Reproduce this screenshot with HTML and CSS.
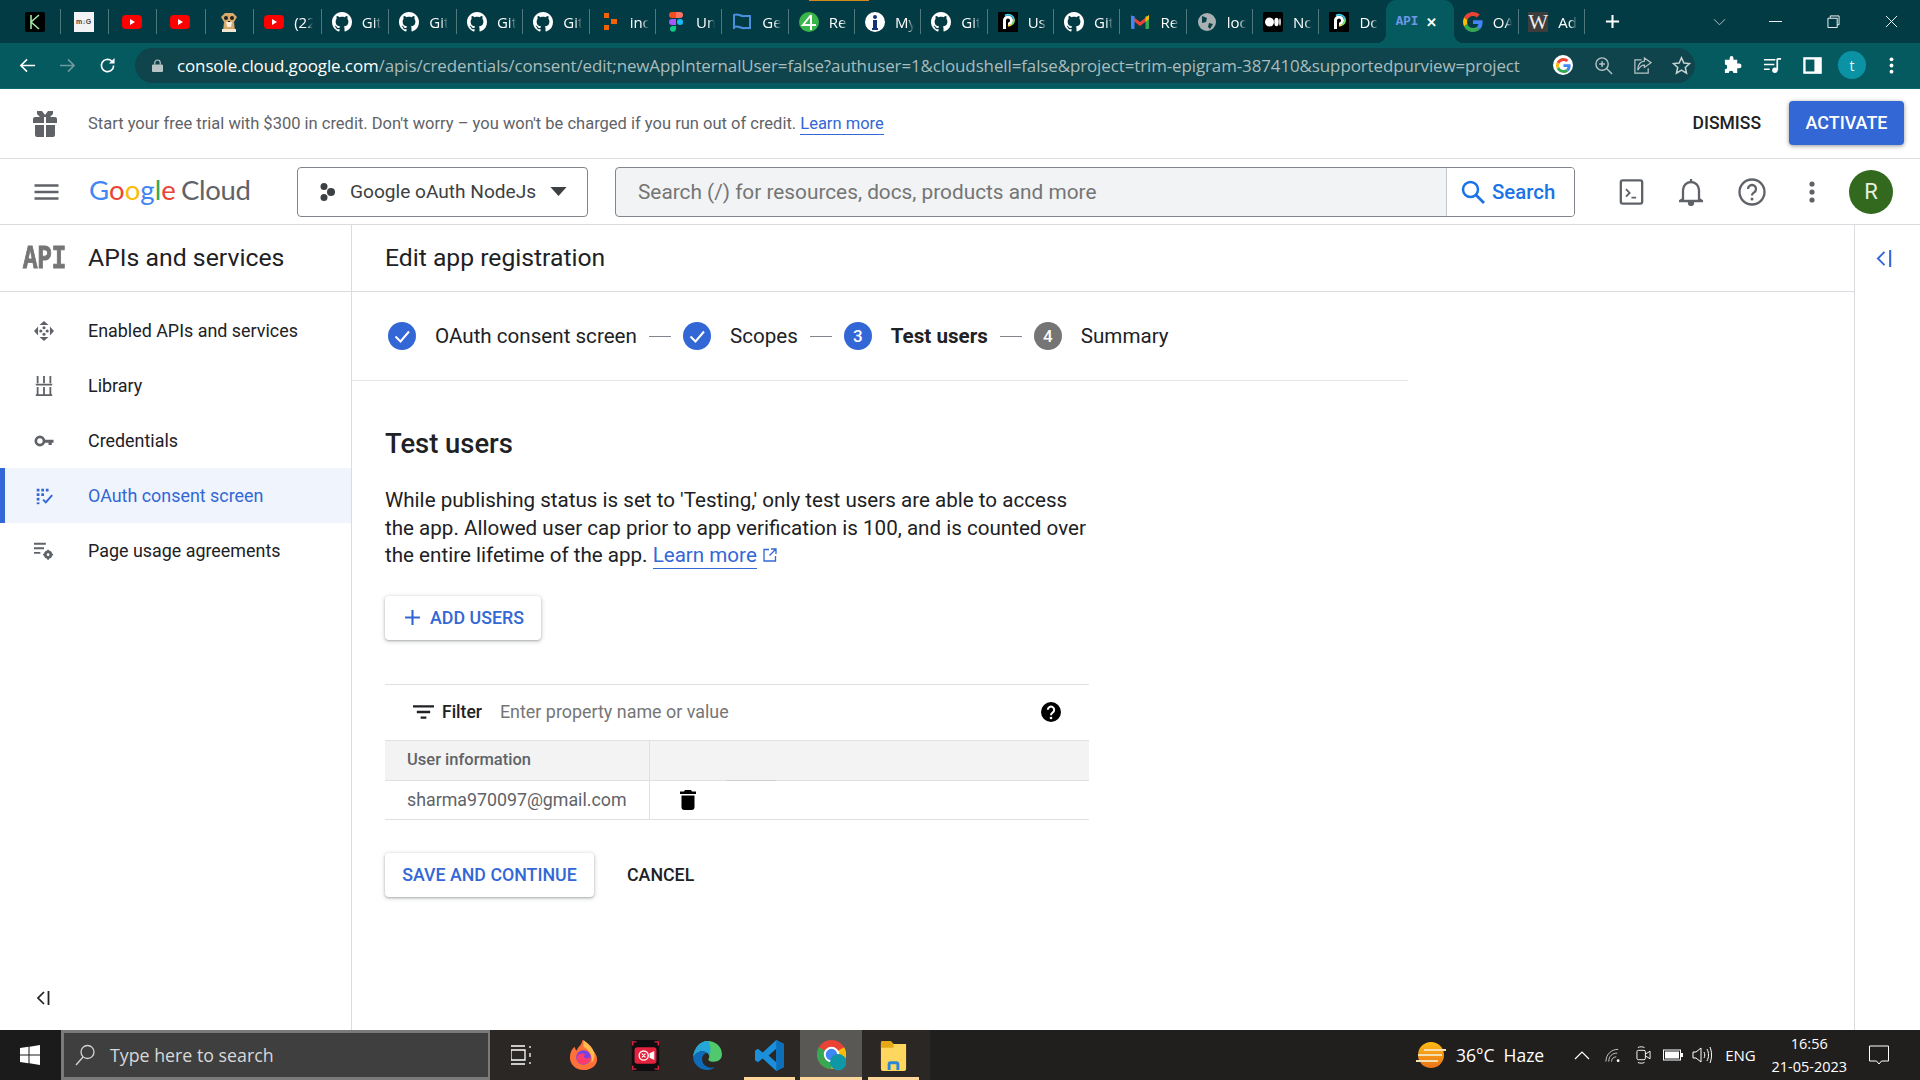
FILE: index.html
```html
<!DOCTYPE html>
<html lang="en">
<head>
<meta charset="utf-8">
<title>Edit app registration</title>
<link rel="stylesheet" href="styles.css">
</head>
<body>
<svg class="defs" aria-hidden="true">
  <symbol id="gh" viewBox="0 0 16 16"><path fill="#fff" fill-rule="evenodd" d="M8 0C3.58 0 0 3.58 0 8c0 3.54 2.29 6.53 5.47 7.59.4.07.55-.17.55-.41 0-.19-.01-.82-.01-1.49-2.01.37-2.53-.49-2.69-.94-.09-.23-.48-.94-.82-1.13-.28-.15-.68-.52-.01-.53.63-.01 1.08.58 1.23.82.72 1.21 1.87.87 2.33.66.07-.52.28-.87.51-1.07-1.78-.2-3.64-.89-3.64-3.95 0-.87.31-1.59.82-2.15-.08-.2-.36-1.02.08-2.12 0 0 .67-.21 2.2.82.64-.18 1.32-.27 2-.27.68 0 1.36.09 2 .27 1.53-1.04 2.2-.82 2.2-.82.44 1.1.16 1.92.08 2.12.51.56.82 1.27.82 2.15 0 3.07-1.87 3.75-3.65 3.95.29.25.54.73.54 1.48 0 1.07-.01 1.93-.01 2.2 0 .21.15.46.55.38A8.013 8.013 0 0016 8c0-4.42-3.58-8-8-8z"/></symbol>
  <symbol id="yt" viewBox="0 0 20 20"><rect y="3" width="20" height="14" rx="4" fill="#f00"/><path d="M8 7l5 3-5 3z" fill="#fff"/></symbol>
  <symbol id="gg" viewBox="0 0 48 48"><path fill="#EA4335" d="M24 9.5c3.54 0 6.71 1.22 9.21 3.6l6.85-6.85C35.9 2.38 30.47 0 24 0 14.62 0 6.51 5.38 2.56 13.22l7.98 6.19C12.43 13.72 17.74 9.5 24 9.5z"/><path fill="#4285F4" d="M46.98 24.55c0-1.57-.15-3.09-.38-4.55H24v9.02h12.94c-.58 2.96-2.26 5.48-4.78 7.18l7.73 6c4.51-4.18 7.09-10.36 7.09-17.65z"/><path fill="#FBBC05" d="M10.53 28.59c-.48-1.45-.76-2.99-.76-4.59s.27-3.14.76-4.59l-7.98-6.19C.92 16.46 0 20.12 0 24c0 3.88.92 7.54 2.56 10.78l7.97-6.19z"/><path fill="#34A853" d="M24 48c6.48 0 11.93-2.13 15.89-5.81l-7.73-6c-2.15 1.45-4.92 2.3-8.16 2.3-6.26 0-11.57-4.22-13.47-9.91l-7.98 6.19C6.51 42.62 14.62 48 24 48z"/></symbol>
  <symbol id="pd" viewBox="0 0 20 20"><rect width="20" height="20" rx="1" fill="#000"/><path d="M6.500 17V8.500a3.500 3.500 0 1 1 3.500 3.500" fill="none" stroke="#fff" stroke-width="3"/><path d="M7 3.500A6 6 0 0 1 16 7" fill="none" stroke="#37d0ee" stroke-width="1.800"/><path d="M16 7a6 6 0 0 1-3 6" fill="none" stroke="#7be36b" stroke-width="1.800"/><path d="M13 13l-3 1" fill="none" stroke="#f6d13c" stroke-width="1.800"/></symbol>
</svg>

<header class="tabstrip">
  <div class="tab narrow first"><svg class="ti" viewBox="0 0 20 20"><rect width="20" height="20" rx="2" fill="#000"/><path d="M6 3v14M14 3l-8 7 8 7" fill="none" stroke="#9fe89f" stroke-width="1.600"/></svg></div>
  <div class="tab narrow"><span class="mg">m↓G</span></div>
  <div class="tab narrow"><svg class="ti"><use href="#yt"/></svg></div>
  <div class="tab narrow"><svg class="ti"><use href="#yt"/></svg></div>
  <div class="tab narrow"><svg class="ti" viewBox="0 0 20 20"><path d="M2 5l4-4h8l4 4-3 5 1 9H4l1-9z" fill="#d9a96c"/><circle cx="7" cy="6" r="2" fill="#222"/><circle cx="13" cy="6" r="2" fill="#222"/><path d="M7 10h6l-1 5H8z" fill="#f7eedd"/><path d="M9 9h2v1H9z" fill="#222"/><path d="M3 20h14v-3H3z" fill="#f3e6cf"/></svg></div>
  <div class="tab wide-a"><svg class="ti"><use href="#yt"/></svg><span class="tt">(22</span></div>
  <div class="tab wide-a"><svg class="ti"><use href="#gh"/></svg><span class="tt">Git</span></div>
  <div class="tab wide-a"><svg class="ti"><use href="#gh"/></svg><span class="tt">Git</span></div>
  <div class="tab wide-b"><svg class="ti"><use href="#gh"/></svg><span class="tt">Git</span></div>
  <div class="tab wide-b"><svg class="ti"><use href="#gh"/></svg><span class="tt">Git</span></div>
  <div class="tab wide-b"><svg class="ti" viewBox="0 0 20 20"><path d="M4 1h5v5H4zM11 7h6v5h-6zM4 13h5v5H4z" fill="#f26207"/></svg><span class="tt">inc</span></div>
  <div class="tab wide-b"><svg class="ti" viewBox="0 0 20 20"><path d="M10 0h4a3 3 0 0 1 0 6h-4z" fill="#ff7262"/><path d="M10 0H6a3 3 0 0 0 0 6h4z" fill="#f24e1e"/><path d="M10 7H6a3 3 0 0 0 0 6h4z" fill="#a259ff"/><circle cx="14" cy="10" r="3" fill="#1abcfe"/><path d="M6 14h4v3a3 3 0 1 1-4-3z" fill="#0acf83"/></svg><span class="tt">Un</span></div>
  <div class="tab wide-b"><svg class="ti" viewBox="0 0 20 20"><path d="M2 17V3c4-2 7 2 11 1h5v12h-5c-4 1-7-3-11-1" fill="none" stroke="#4a8fdc" stroke-width="2"/></svg><span class="tt">Ge</span></div>
  <div class="tab wide-b"><svg class="ti" viewBox="0 0 20 20"><circle cx="10" cy="10" r="10" fill="#3ab54a"/><path d="M12 3L4 13h13M12 3v15" fill="none" stroke="#fff" stroke-width="2"/></svg><span class="tt">Re</span></div>
  <div class="tab wide-b"><svg class="ti" viewBox="0 0 20 20"><circle cx="10" cy="10" r="10" fill="#fff"/><circle cx="10" cy="5" r="2" fill="#12357a"/><path d="M8 8h4v8h1v2H7v-2h1z" fill="#12357a"/></svg><span class="tt">My</span></div>
  <div class="tab wide-b"><svg class="ti"><use href="#gh"/></svg><span class="tt">Git</span></div>
  <div class="tab wide-b"><svg class="ti"><use href="#pd"/></svg><span class="tt">Us</span></div>
  <div class="tab wide-b"><svg class="ti"><use href="#gh"/></svg><span class="tt">Git</span></div>
  <div class="tab wide-b"><svg class="ti" viewBox="0 0 20 20"><path d="M1 3l9 7 9-7v4l-9 7-9-7z" fill="#ea4335"/><path d="M1 4h3.500v13H2a1 1 0 0 1-1-1z" fill="#4285f4"/><path d="M19 4h-3.500v13H18a1 1 0 0 0 1-1z" fill="#34a853"/><path d="M15.500 5.700L19 3v4l-3.500 2.700z" fill="#fbbc05"/></svg><span class="tt">Re</span></div>
  <div class="tab wide-b"><svg class="ti" viewBox="0 0 20 20"><circle cx="10" cy="10" r="9" fill="#a8b0b2"/><path d="M5 4l5 2-1 4-4 1zM12 11l4 1-3 5-2-2z" fill="#0a3f47"/></svg><span class="tt">loc</span></div>
  <div class="tab wide-b"><svg class="ti" viewBox="0 0 20 20"><rect width="20" height="20" rx="2" fill="#000"/><ellipse cx="6.500" cy="10" rx="4.500" ry="4.500" fill="#fff"/><ellipse cx="13.500" cy="10" rx="2.200" ry="4.200" fill="#fff"/><ellipse cx="17" cy="10" rx=".8" ry="3.800" fill="#fff"/></svg><span class="tt">Nc</span></div>
  <div class="tab wide-b last"><svg class="ti"><use href="#pd"/></svg><span class="tt">Dc</span></div>
  <div class="tab-active"><span class="api-fav">API</span><span class="tab-x">✕</span></div>
  <div class="tab wide-c"><svg class="ti"><use href="#gg"/></svg><span class="tt">OA</span></div>
  <div class="tab wide-c"><span class="wiki">W</span><span class="tt">Ad</span></div>
  <svg class="newtab" viewBox="0 0 16 16"><path d="M8 1v14M1 8h14" stroke="#fff" stroke-width="2.200"/></svg>
  <div class="winctl">
    <svg class="tabs-chev" viewBox="0 0 14 8"><path d="M1 1l6 6 6-6" fill="none" stroke="#b8c9cc" stroke-width="1"/></svg>
    <div class="wbtn"><svg viewBox="0 0 14 14"><path d="M0 7h14" stroke="#fff"/></svg></div>
    <div class="wbtn"><svg viewBox="0 0 14 14"><path d="M3.500 3V1h9.500v9.500h-2M1 3.500h10v10H1z" fill="none" stroke="#fff"/></svg></div>
    <div class="wbtn"><svg viewBox="0 0 14 14"><path d="M1 1l12 12M13 1L1 13" stroke="#fff"/></svg></div>
  </div>
</header>

<nav class="toolbar">
  <div class="navbtns">
    <svg viewBox="0 0 18 16"><path d="M17 8H2M8.500 1.500L2 8l6.500 6.500" fill="none" stroke="#fff" stroke-width="1.700"/></svg>
    <svg viewBox="0 0 18 16"><path d="M1 8h15M9.500 1.500L16 8l-6.500 6.500" fill="none" stroke="#6f9a9e" stroke-width="1.700"/></svg>
    <svg viewBox="0 0 18 18"><path d="M15.500 9a6.500 6.500 0 1 1-2-4.700" fill="none" stroke="#fff" stroke-width="1.700"/><path d="M16.500 1v6h-6z" fill="#fff"/></svg>
  </div>
  <div class="omnibox">
    <svg class="lock" viewBox="0 0 12 14"><path d="M3 6V4a3 3 0 0 1 6 0v2" fill="none" stroke="#b7c4c6" stroke-width="1.300"/><rect y="6" width="12" height="8" rx="1" fill="#b7c4c6"/></svg>
    <span class="url"><span class="host">console.cloud.google.com</span>/apis/credentials/consent/edit;newAppInternalUser=false?authuser=1&amp;cloudshell=false&amp;project=trim-epigram-387410&amp;supportedpurview=project</span>
    <div class="omni-icons">
      <span class="gbadge"><svg viewBox="0 0 48 48"><use href="#gg"/></svg></span>
      <svg class="oi" viewBox="0 0 20 20"><circle cx="8.500" cy="8.500" r="6.500" fill="none" stroke="#b7c4c6" stroke-width="1.500"/><path d="M13 13l6 6M8.500 5.500v6M5.500 8.500h6" stroke="#b7c4c6" stroke-width="1.500"/></svg>
      <svg class="oi" viewBox="0 0 20 20"><path d="M9 4H2v14h14v-5" fill="none" stroke="#b7c4c6" stroke-width="1.300"/><path d="M12 2l7 5-7 5V9.500C9 9.500 7 11 5 15c0-6 3-9 7-9.500z" fill="none" stroke="#b7c4c6" stroke-width="1.300"/></svg>
      <svg class="oi" viewBox="0 0 20 20"><path d="M10 1.800l2.500 5.600 6 .6-4.500 4 1.300 6-5.300-3.100L4.700 18l1.300-6-4.500-4 6-.6z" fill="none" stroke="#c7d2d3" stroke-width="1.600"/></svg>
    </div>
  </div>
  <div class="tool-icons">
    <svg viewBox="0 0 20 20"><path d="M7 2a2 2 0 0 1 4 0v2h4v4h2a2.500 2.500 0 0 1 0 5h-2v5h-4a2.500 2.500 0 0 0-5 0H2v-4a2.500 2.500 0 0 0 0-5V4h5z" fill="#fff"/></svg>
    <svg viewBox="0 0 20 20"><path d="M1 4h12M1 9h11M1 14h6" stroke="#fff" stroke-width="1.600"/><path d="M15 3h4M15 3v12" stroke="#fff" stroke-width="1.800" fill="none"/><circle cx="12.500" cy="15" r="2.800" fill="#fff"/></svg>
    <svg viewBox="0 0 20 20"><rect x="1.500" y="2.500" width="17" height="15" fill="none" stroke="#fff" stroke-width="2.500"/><rect x="12" y="2" width="7" height="16" fill="#fff"/></svg>
    <span class="profile-t">t</span>
    <svg viewBox="0 0 20 20"><circle cx="10" cy="3.500" r="2" fill="#fff"/><circle cx="10" cy="10" r="2" fill="#fff"/><circle cx="10" cy="16.500" r="2" fill="#fff"/></svg>
  </div>
</nav>

<section class="banner">
  <svg class="gift" viewBox="0 0 24 26"><path d="M2 6h9v6H0V8a2 2 0 0 1 2-2zM13 6h9a2 2 0 0 1 2 2v4H13zM2 14h9v12H4a2 2 0 0 1-2-2zM13 14h9v10a2 2 0 0 1-2 2h-7zM4 0h5l3 4 3-4h5v3l-3 3H7L4 3z" fill="#5f6368"/></svg>
  <p class="banner-text">Start your free trial with $300 in credit. Don't worry – you won't be charged if you run out of credit. <a class="link" href="#">Learn more</a></p>
  <span class="dismiss">DISMISS</span>
  <span class="activate">ACTIVATE</span>
</section>

<section class="appbar">
  <svg class="burger" viewBox="0 0 24 16"><path d="M0 1.500h24M0 8h24M0 14.500h24" stroke="#5f6368" stroke-width="2.500"/></svg>
  <div class="logo"><span class="c-b">G</span><span class="c-r">o</span><span class="c-y">o</span><span class="c-b">g</span><span class="c-g">l</span><span class="c-r">e</span><span class="cloud">Cloud</span></div>
  <div class="project">
    <svg viewBox="0 0 18 18"><circle cx="6" cy="3.500" r="3.500" fill="#3c4043"/><circle cx="6" cy="14.500" r="3.500" fill="#3c4043"/><circle cx="13" cy="9" r="4" fill="#3c4043"/></svg>
    <span class="project-name">Google oAuth NodeJs</span>
    <svg class="caret" viewBox="0 0 18 10"><path d="M0 0h18L9 10z" fill="#3c4043"/></svg>
  </div>
  <div class="search">
    <span class="search-ph">Search (/) for resources, docs, products and more</span>
    <span class="search-btn"><svg viewBox="0 0 24 24"><circle cx="9.500" cy="9.500" r="7.500" fill="none" stroke="#1a73e8" stroke-width="2.500"/><path d="M15 15l8 8" stroke="#1a73e8" stroke-width="2.800"/></svg>Search</span>
  </div>
  <div class="app-icons">
    <svg viewBox="0 0 26 28"><rect x="1.500" y="1.500" width="23" height="25" rx="2" fill="none" stroke="#5f6368" stroke-width="2.500"/><path d="M7 11l4 4-4 4M13 20h5" fill="none" stroke="#5f6368" stroke-width="2"/></svg>
    <svg viewBox="0 0 24 28"><path d="M4 21V12a8 8 0 0 1 16 0v9l3 2H1zM10 25h4a2 2 0 0 1-4 0zM12 1v3" fill="none" stroke="#5f6368" stroke-width="2.300"/></svg>
    <svg viewBox="0 0 28 28"><circle cx="14" cy="14" r="12.500" fill="none" stroke="#5f6368" stroke-width="2.300"/><path d="M10 11a4 4 0 1 1 6 3.500c-1.500.8-2 1.500-2 3" fill="none" stroke="#5f6368" stroke-width="2.300"/><circle cx="14" cy="21" r="1.500" fill="#5f6368"/></svg>
    <svg viewBox="0 0 24 24"><circle cx="12" cy="4" r="2.600" fill="#5f6368"/><circle cx="12" cy="12" r="2.600" fill="#5f6368"/><circle cx="12" cy="20" r="2.600" fill="#5f6368"/></svg>
  </div>
  <span class="avatar">R</span>
</section>

<div class="workspace">
  <aside class="sidebar">
    <div class="side-head"><span class="api-logo">API</span><span class="side-title">APIs and services</span></div>
    <ul class="side-nav">
      <li class="side-item">
        <svg viewBox="0 0 22 22"><path d="M11 0l5 4.500H6zM11 22l-5-4.500h10zM0 11l4.500-5v10zM22 11l-4.500 5V6z" fill="#5f6368"/><circle cx="11" cy="7.500" r="1.700" fill="#5f6368"/><circle cx="11" cy="14.500" r="1.700" fill="#5f6368"/><circle cx="7.500" cy="11" r="1.700" fill="#5f6368"/><circle cx="14.500" cy="11" r="1.700" fill="#5f6368"/></svg>
        Enabled APIs and services</li>
      <li class="side-item">
        <svg viewBox="0 0 22 22"><path d="M4 0v8M11 0v8M18 0v8M2 9.500h18M4 12v8M11 12v8M18 12v8M2 21h18" stroke="#5f6368" stroke-width="2" fill="none"/></svg>
        Library</li>
      <li class="side-item">
        <svg viewBox="0 0 22 22"><circle cx="6.500" cy="11" r="4.500" fill="none" stroke="#5f6368" stroke-width="3"/><path d="M11 9.500h10.500v3.500h-2v2.500h-3.500v-2.500h-5z" fill="#5f6368"/></svg>
        Credentials</li>
      <li class="side-item active">
        <svg viewBox="0 0 22 22"><g fill="#3367d6"><rect x="3" y="3" width="3" height="3"/><rect x="8" y="3" width="3" height="3"/><rect x="13" y="3" width="3" height="3"/><rect x="3" y="8" width="3" height="3"/><rect x="8" y="8" width="3" height="3"/><rect x="3" y="13" width="3" height="3"/><rect x="3" y="18" width="3" height="2"/></g><path d="M10 15l3 3 7-8" fill="none" stroke="#3367d6" stroke-width="2.200"/></svg>
        OAuth consent screen</li>
      <li class="side-item">
        <svg viewBox="0 0 22 22"><path d="M0 3h13M0 8h11M0 13h7" stroke="#5f6368" stroke-width="2"/><circle cx="15.500" cy="15" r="3" fill="none" stroke="#5f6368" stroke-width="3"/><path d="M15.500 9.500v2M15.500 18.500v2M10 15h2M19 15h2" stroke="#5f6368" stroke-width="2"/></svg>
        Page usage agreements</li>
    </ul>
    <svg class="side-collapse" viewBox="0 0 13 14"><path d="M7 1L1 7l6 6" fill="none" stroke="#202124" stroke-width="1.700"/><path d="M11.500 0v14" stroke="#202124" stroke-width="1.800"/></svg>
  </aside>

  <main class="panel">
    <div class="panel-head">Edit app registration</div>
    <div class="stepper">
      <span class="step-dot"><svg viewBox="0 0 28 28"><path d="M7.500 14.500l5 5 8.500-10" fill="none" stroke="#fff" stroke-width="2"/></svg></span>
      <span class="step-label">OAuth consent screen</span><i class="step-line"></i>
      <span class="step-dot"><svg viewBox="0 0 28 28"><path d="M7.500 14.500l5 5 8.500-10" fill="none" stroke="#fff" stroke-width="2"/></svg></span>
      <span class="step-label">Scopes</span><i class="step-line"></i>
      <span class="step-dot">3</span>
      <span class="step-label strong">Test users</span><i class="step-line"></i>
      <span class="step-dot grey">4</span>
      <span class="step-label">Summary</span>
    </div>
    <section class="form">
      <h1 class="form-title">Test users</h1>
      <p class="form-desc">While publishing status is set to 'Testing,' only test users are able to access<br>the app. Allowed user cap prior to app verification is 100, and is counted over<br>the entire lifetime of the app. <a class="link" href="#">Learn more</a><svg class="ext" viewBox="0 0 14 14"><path d="M6 1.500H1v11.500h11.500V8M8 1h5v5M13 1L6.500 7.500" fill="none" stroke="#3367d6" stroke-width="1.300"/></svg></p>
      <button class="btn raised add"><svg viewBox="0 0 16 16"><path d="M8 1v14M1 8h14" stroke="#3367d6" stroke-width="2"/></svg>ADD USERS</button>
      <div class="table">
        <div class="filter-row">
          <svg class="filter-ic" viewBox="0 0 22 14"><path d="M0 1.200h22M4 7h14M8 12.800h6" stroke="#202124" stroke-width="2.400"/></svg>
          <span class="filter-label">Filter</span>
          <span class="filter-ph">Enter property name or value</span>
          <svg class="help" viewBox="0 0 20 20"><circle cx="10" cy="10" r="10" fill="#000"/><path d="M6.800 7.800a3.200 3.200 0 1 1 4.800 2.800c-1.100.7-1.600 1.200-1.600 2.600" fill="none" stroke="#fff" stroke-width="2"/><circle cx="10" cy="16" r="1.300" fill="#fff"/></svg>
        </div>
        <div class="t-row t-head"><div class="t-c1">User information</div><div class="t-c2"></div></div>
        <div class="t-row"><div class="t-c1 email">sharma970097@gmail.com</div><div class="t-c2"><svg class="trash" viewBox="0 0 16 20"><path d="M5 0h6l1 1.500h4V4H0V1.500h4zM1.500 5.500h13V17a3 3 0 0 1-3 3h-7a3 3 0 0 1-3-3z" fill="#000"/></svg></div></div>
      </div>
      <div class="actions">
        <button class="btn raised save">SAVE AND CONTINUE</button>
        <button class="btn cancel">CANCEL</button>
      </div>
    </section>
  </main>

  <aside class="rail">
    <svg viewBox="0 0 18 18"><path d="M9 2L2 9l7 7" fill="none" stroke="#3367d6" stroke-width="2"/><path d="M15 0v18" stroke="#3367d6" stroke-width="2.200"/></svg>
  </aside>
</div>

<footer class="taskbar">
  <div class="start"><svg viewBox="0 0 20 20"><path d="M0 3l8.500-1.200V9.500H0zM9.500 1.700L20 0v9.500H9.500zM0 10.500h8.500v7.700L0 17zM9.500 10.500H20V20L9.500 18.300z" fill="#fff"/></svg></div>
  <div class="ts-box">
    <svg viewBox="0 0 20 22"><circle cx="12.500" cy="8" r="6.500" fill="none" stroke="#d5d5d5" stroke-width="1.300"/><path d="M8 13l-7 8" stroke="#d5d5d5" stroke-width="1.300"/></svg>
    <span>Type here to search</span>
  </div>
  <div class="ts-apps">
    <div class="app view"><svg viewBox="0 0 20 20"><path d="M0 1h14M0 19h14M14 5H0v10h14zM19 1v2M19 8v4M19 17v2" fill="none" stroke="#fff" stroke-width="1.300"/></svg></div>
    <div class="app"><svg viewBox="0 0 28 32"><path d="M14 31C6 31 0 25 0 18 0 13 2 9 5 7c0 2 1 3 2 4 1-4 5-5 6-11 4 3 9 6 11 11 2 2 4 5 4 9 0 6-6 11-14 11z" fill="#ff7139"/><path d="M14 0c4 3 9 7 11 13 1 4 0 8-3 11 2-6-1-13-8-17z" fill="#ffbd4f"/><circle cx="14" cy="18" r="7.500" fill="#7542e5"/><path d="M7 17c2-3 6-4 9-2-2 1-2 3 0 4 3 0 5-1 5-3 1 4-2 9-7 9-4 0-7-3-7-8z" fill="#ff3b6b"/></svg></div>
    <div class="app"><svg viewBox="0 0 30 34"><rect width="30" height="34" rx="4" fill="#0e0e10"/><rect x="3" y="8" width="24" height="18" rx="3" fill="#e5223e"/><circle cx="13" cy="17" r="5" fill="none" stroke="#fff" stroke-width="1.500"/><path d="M11 15l4 4M15 15l-4 4M20 15l4-2v8l-4-2z" stroke="#fff" stroke-width="1.200" fill="#fff"/><path d="M1 6V2h4M29 6V2h-4M1 28v4h4M29 28v4h-4" fill="none" stroke="#e5223e" stroke-width="1.500"/></svg></div>
    <div class="app"><svg viewBox="0 0 32 32"><path d="M16 0c9 0 16 6 16 15 0 5-4 8-9 8-3 0-6-1-6-3 0-1 1-1 1-3 0-3-3-6-8-6-4 0-8 3-10 6C2 7 8 0 16 0z" fill="#4fc96b"/><path d="M10 11c-5 0-9 4-10 6 0 8 7 15 16 15 3 0 6-1 8-3-9 2-14-4-14-9 0-4 3-7 7-7-2-1-4-2-7-2z" fill="#0f6bb8"/><path d="M16 0C8 0 2 7 0 17c2-3 6-6 10-6 5 0 8 3 8 6 3-7 0-17-2-17z" fill="#25a5d8"/></svg></div>
    <div class="app open"><svg viewBox="0 0 30 32"><path d="M22 0l8 4v24l-8 4L8 19l-5 4-3-2V11l3-2 5 4zM22 9l-8 7 8 7z" fill="#1c8fdc"/><path d="M22 0l8 4v24l-8 4V23V9z" fill="#0c6fb8"/></svg></div>
    <div class="app chrome">
      <svg viewBox="0 0 30 32"><circle cx="15" cy="15" r="15" fill="#ea4335"/><path d="M15 15L2 22.500A15 15 0 0 1 2 7.500z" fill="#34a853"/><path d="M15 15L15 30A15 15 0 0 1 2 22.500z" fill="#34a853"/><path d="M15 15L28 7.500A15 15 0 0 1 15 30z" fill="#fbbc05"/><circle cx="15" cy="15" r="7" fill="#4285f4" stroke="#fff" stroke-width="2"/><circle cx="22" cy="23" r="8.500" fill="#0f97a6"/></svg>
    </div>
    <div class="app open"><svg viewBox="0 0 28 32"><path d="M1 3a2 2 0 0 1 2-2h8l3 3h13v26a2 2 0 0 1-2 2H3a2 2 0 0 1-2-2z" fill="#ffd75e"/><path d="M1 3a2 2 0 0 1 2-2h8l3 3v4H1z" fill="#e6a817"/><path d="M8 31v-6a3 3 0 0 1 3-3h6a3 3 0 0 1 3 3v6z" fill="#2b87d3"/><rect x="11" y="25" width="6" height="6" fill="#ffd75e"/></svg></div>
  </div>
  <div class="tray">
    <svg class="sun" viewBox="0 0 30 26"><defs><linearGradient id="sg" x1="0" y1="0" x2="0" y2="1"><stop offset="0" stop-color="#fdbb14"/><stop offset="1" stop-color="#e9731a"/></linearGradient></defs><circle cx="15" cy="13" r="13" fill="url(#sg)"/><path d="M8 8h22M2 13h24M0 19h22" stroke="#f4dfb5" stroke-width="1.800"/></svg>
    <span class="temp">36°C</span><span class="haze">Haze</span>
    <svg class="chev" viewBox="0 0 16 9"><path d="M1 8l7-7 7 7" fill="none" stroke="#fff" stroke-width="1.200"/></svg>
    <svg class="tr-ic" viewBox="0 0 16 16"><path d="M1 15c0-8 6-13 13-13M4 15c0-6 4-9 9-9M7 15c0-3 2-5 5-5" fill="none" stroke="#cfcfcf" stroke-width="1"/><circle cx="14" cy="14" r="1.500" fill="#fff"/></svg>
    <svg class="tr-ic" viewBox="0 0 16 20"><rect x="1" y="5" width="9" height="10" rx="1.500" fill="none" stroke="#fff"/><path d="M10 9l5-3v8l-5-3M2 2c2-1 5-1 7 0M2 18c2 1 5 1 7 0" fill="none" stroke="#fff"/></svg>
    <svg class="batt" viewBox="0 0 20 12"><rect x=".5" y="1" width="17" height="10" fill="none" stroke="#fff"/><rect x="2" y="2.500" width="14" height="7" fill="#fff"/><rect x="18" y="4" width="2" height="4" fill="#fff"/></svg>
    <svg class="vol" viewBox="0 0 20 18"><path d="M1 6h3l5-4v14l-5-4H1z" fill="none" stroke="#fff"/><path d="M12 6c1 2 1 4 0 6M15 3c2 4 2 8 0 12M18 1c2 5 2 11 0 16" fill="none" stroke="#fff"/></svg>
    <span class="lang">ENG</span>
    <div class="clock"><span>16:56</span><span>21-05-2023</span></div>
    <svg class="notif" viewBox="0 0 20 20"><path d="M.5 1h19v15h-7l-2.500 3-2.500-3h-7z" fill="none" stroke="#fff"/></svg>
  </div>
</footer>
</body>
</html>
```

FILE: styles.css
```css
* { box-sizing: border-box; }
html, body { margin: 0; height: 100%; }
body {
  width: 1920px; height: 1080px; overflow: hidden;
  display: flex; flex-direction: column;
  font-family: Roboto, "Liberation Sans", sans-serif;
  color: #202124; background: #fff;
}
.defs { display: none; }
p, h1, ul { margin: 0; padding: 0; }
ul { list-style: none; }

/* tab strip */
.tabstrip {
  height: 43px; flex: none; display: flex; align-items: center;
  background: #033b44; padding-left: 12px; position: relative;
  font-family: "Open Sans", "Noto Sans", sans-serif;
}
.tabstrip::before {
  content: ""; position: absolute; left: 809px; top: 0; width: 60px; height: 1px; background: #d28a1d;
}
.tab {
  height: 25px; display: flex; align-items: center; flex: none;
  border-right: 1px solid #4f777d; padding-left: 10px;
}
.tab.narrow { width: 48.4px; padding-left: 13px; }
.tab.first { width: 48.600px; }
.tab.wide-a { width: 67.600px; }
.tab.wide-b { width: 66.350px; }
.tab.wide-c { width: 65.500px; padding-left: 9px; }
.tab.last { border-right: 0; }
.ti { width: 20px; height: 20px; flex: none; }
.tt {
  margin-left: 10px; width: 25px; white-space: nowrap;
  font-size: 15px; line-height: 20px; color: #fff;
  -webkit-mask-image: linear-gradient(90deg, #000 12px, transparent 19px);
  mask-image: linear-gradient(90deg, #000 12px, transparent 19px);
}
.mg {
  width: 20px; height: 20px; background: #f1f3f4; color: #444; font: 700 7px/20px "Liberation Sans", sans-serif;
  text-align: center; letter-spacing: 0;
}
.wiki {
  width: 20px; height: 20px; background: #3d3d3d; color: #eee; font: 400 21px/20px "Liberation Serif", serif; text-align: center; flex: none;
}
.tab-active {
  width: 68px; height: 43px; background: #055a60; border-radius: 10px 10px 0 0;
  display: flex; align-items: center; padding-left: 10px; flex: none; position: relative;
}
.tab-active::before, .tab-active::after {
  content: ""; position: absolute; bottom: 0; width: 10px; height: 10px;
}
.tab-active::before { left: -10px; background: radial-gradient(circle at 0 0, transparent 10px, #055a60 10.500px); }
.tab-active::after { right: -10px; background: radial-gradient(circle at 100% 0, transparent 10px, #055a60 10.500px); }
.api-fav { font: 700 12.500px/20px "Liberation Mono", monospace; color: #6f97ea; width: 21px; }
.tab-x { margin-left: 9px; font-size: 13px; color: #fff; font-weight: 700; }
.newtab { width: 15px; height: 15px; margin-left: 20px; flex: none; }
.winctl { margin-left: auto; display: flex; align-items: center; height: 43px; }
.tabs-chev { width: 13px; height: 8px; margin-right: 20px; }
.wbtn { width: 58px; display: flex; justify-content: center; }
.wbtn svg { width: 13px; height: 13px; }

/* toolbar */
.toolbar {
  height: 46px; flex: none; background: #055a60; display: flex; align-items: center;
  padding-bottom: 1px; border-bottom: 1px solid #0a6c72;
  font-family: "Open Sans", "Noto Sans", sans-serif;
}
.navbtns { width: 135px; padding-left: 19px; display: flex; align-items: center; gap: 23px; flex: none; }
.navbtns svg { width: 17px; height: 17px; flex: none; }
.omnibox {
  width: 1560px; height: 35px; background: #0f444c; border-radius: 18px;
  display: flex; align-items: center; padding-left: 17px; flex: none;
}
.lock { width: 11px; height: 13px; flex: none; }
.url { margin-left: 14px; font-size: 16.950px; color: #a9bcbe; white-space: nowrap; letter-spacing: -.1px; }
.host { color: #fff; }
.omni-icons { margin-left: auto; display: flex; align-items: center; gap: 20px; padding-right: 4px; }
.gbadge { width: 20px; height: 20px; background: #fff; border-radius: 50%; padding: 2.500px; display: block; flex: none; margin-right: 1px; }
.gbadge svg { width: 15px; height: 15px; display: block; }
.oi { width: 19px; height: 19px; flex: none; }
.tool-icons { display: flex; align-items: center; padding-left: 28px; gap: 21px; flex: none; }
.tool-icons svg { width: 19px; height: 19px; flex: none; }
.profile-t {
  width: 28px; height: 28px; border-radius: 50%; background: #0b92a4; color: #e6f6f8;
  display: flex; align-items: center; justify-content: center; font-size: 14px; margin: 0 -5px; flex: none;
}

/* banner */
.banner {
  height: 70px; flex: none; display: flex; align-items: center; border-bottom: 1px solid #dadce0;
  padding-left: 33px; padding-right: 16px;
}
.gift { width: 24px; height: 26px; flex: none; }
.banner-text { margin-left: 31px; font-size: 16.500px; color: #5f6368; }
.link { color: #3367d6; text-decoration: none; border-bottom: 1px solid #3367d6; padding-bottom: 1px; }
.dismiss { margin-left: auto; font-size: 17.500px; font-weight: 500; color: #202124; margin-bottom: 1px; }
.activate {
  margin-left: 28px; width: 115px; height: 44px; margin-bottom: 2px; background: #3367d6; color: #fff; border-radius: 4px;
  font-size: 17.900px; font-weight: 500; display: flex; align-items: center; justify-content: center;
  box-shadow: 0 1px 4px rgba(60,64,67,.55);
}

/* app bar */
.appbar {
  height: 66px; flex: none; display: flex; align-items: center; border-bottom: 1px solid #dadce0;
  padding-left: 34px;
}
.burger { width: 25px; height: 16px; flex: none; }
.logo { margin-left: 30px; margin-bottom: 3px; width: 208px; flex: none; font: 400 27.500px/1 Lato, "Open Sans", sans-serif; letter-spacing: .1px; white-space: nowrap; }
.c-b { color: #4285f4; } .c-r { color: #ea4335; } .c-y { color: #fbbc05; } .c-g { color: #34a853; }
.cloud { color: #5f6368; margin-left: 5px; letter-spacing: -.3px; }
.project {
  width: 291px; height: 50px; border: 1px solid #80868b; border-radius: 4px; display: flex; align-items: center;
  padding-left: 20px; flex: none;
}
.project > svg:first-child { width: 18px; height: 18px; flex: none; }
.project-name { margin-left: 14px; font-size: 19.100px; color: #3c4043; white-space: nowrap; margin-bottom: 1px; }
.caret { width: 17px; height: 9px; margin-left: 14px; flex: none; }
.search {
  width: 960px; height: 50px; margin-left: 27px; border: 1px solid #80868b; border-radius: 4px; background: #f1f3f4;
  display: flex; align-items: center; padding-left: 22px; flex: none; overflow: hidden;
}
.search-ph { font-size: 20.800px; color: #757575; white-space: nowrap; }
.search-btn {
  margin-left: auto; width: 128px; height: 100%; background: #fff; border-left: 1px solid #c4c7c9;
  display: flex; align-items: center; padding-left: 14px; gap: 7px; font-size: 20.400px; font-weight: 500; color: #1a73e8;
}
.search-btn svg { width: 24px; height: 24px; flex: none; }
.app-icons { display: flex; align-items: center; margin-left: 44px; flex: none; }
.app-icons svg { flex: none; }
.app-icons svg:nth-child(1) { width: 25px; height: 26px; }
.app-icons svg:nth-child(2) { width: 24px; height: 28px; margin-left: 35px; }
.app-icons svg:nth-child(3) { width: 28px; height: 28px; margin-left: 35px; }
.app-icons svg:nth-child(4) { width: 24px; height: 24px; margin-left: 34px; }
.avatar {
  width: 44px; height: 44px; margin-left: 25px; border-radius: 50%; background: #33691e; color: #e6efe0;
  display: flex; align-items: center; justify-content: center; font-size: 22px; flex: none;
}

/* workspace */
.workspace { flex: 1; display: flex; min-height: 0; }
.sidebar { width: 352px; flex: none; border-right: 1px solid #dadce0; display: flex; flex-direction: column; }
.side-head { height: 67px; flex: none; display: flex; align-items: center; border-bottom: 1px solid #dadce0; padding: 0 0 2px 23px; }
.api-logo { width: 43px; font: 700 24px/1 "Liberation Mono", monospace; color: #757575; -webkit-text-stroke: .7px #757575; transform: scaleY(1.35); flex: none; margin-top: 6px; }
.side-title { margin-left: 22px; font-size: 24.800px; color: #202124; white-space: nowrap; }
.side-nav { margin-top: 11px; }
.side-item {
  height: 55px; display: flex; align-items: center; font-size: 17.900px; color: #202124; padding-left: 34px; gap: 34px;
}
.side-item svg { width: 20px; height: 20px; flex: none; }
.side-item.active { background: #eff4fd; color: #3367d6; border-left: 5px solid #3367d6; padding-left: 29px; }
.side-collapse { width: 13px; height: 14px; margin-top: auto; margin-left: 37px; margin-bottom: 25px; flex: none; }

.panel { flex: 1; min-width: 0; }
.panel-head {
  height: 67px; display: flex; align-items: center; padding: 0 0 2px 33px; font-size: 24.700px;
  border-bottom: 1px solid #dadce0;
}
.stepper {
  width: 1056px; height: 89px; display: flex; align-items: center; padding-left: 36px; border-bottom: 1px solid #e3e5e8;
}
.step-dot {
  width: 28px; height: 28px; border-radius: 50%; background: #3367d6; color: #fff; font-size: 17px; font-weight: 500;
  display: flex; align-items: center; justify-content: center; flex: none;
}
.step-dot svg { width: 28px; height: 28px; }
.step-dot.grey { background: #757575; }
.step-label { margin-left: 19px; font-size: 20.600px; color: #202124; white-space: nowrap; }
.step-label.strong { font-weight: 700; }
.step-line { width: 22px; height: 1px; background: #80868b; margin: 0 12px 0 12px; flex: none; }

.form { padding-left: 33px; }
.form-title { margin-top: 45px; font-size: 27.400px; line-height: 36px; font-weight: 500; color: #202124; }
.form-desc { margin-top: 25px; font-size: 20.600px; line-height: 27.500px; color: #202124; white-space: nowrap; }
.ext { width: 14px; height: 14px; margin-left: 6px; }
.btn { font-family: inherit; background: #fff; border: 0; border-radius: 4px; font-weight: 500; font-size: 17.800px; display: flex; align-items: center; justify-content: center; padding: 0; }
.raised { color: #3367d6; box-shadow: 0 1px 2px rgba(60,64,67,.3), 0 1px 4px 1px rgba(60,64,67,.18); }
.add { margin-top: 26px; width: 156px; height: 44px; gap: 9px; padding-left: 2px; }
.add svg { width: 17px; height: 17px; }
.table { margin-top: 44px; width: 704px; border-top: 1px solid #e0e0e0; }
.filter-row { height: 55px; display: flex; align-items: center; padding-left: 28px; }
.filter-ic { width: 21px; height: 14px; flex: none; }
.filter-label { margin-left: 8px; font-size: 17.500px; font-weight: 500; color: #202124; }
.filter-ph { margin-left: 18px; font-size: 17.900px; color: #757575; margin-bottom: 1px; }
.help { width: 20px; height: 20px; margin-left: auto; margin-right: 28px; }
.t-row { display: flex; height: 40px; border-top: 1px solid #e0e0e0; }
.t-row:last-child { border-bottom: 1px solid #e0e0e0; height: 40px; }
.t-head { background: #f3f3f3; font-size: 16.500px; font-weight: 500; color: #5f6368; position: relative; }
.t-head::after { content: ""; position: absolute; left: 341px; bottom: -1px; width: 50px; height: 1px; background: #cfcfcf; }
.t-c1 { width: 265px; padding-left: 22px; display: flex; align-items: center; border-right: 1px solid #e0e0e0; flex: none; }
.t-head .t-c1 { padding-bottom: 2px; }
.t-c2 { flex: 1; display: flex; align-items: center; padding-left: 30px; }
.email { font-size: 17.800px; color: #5f6368; }
.trash { width: 16px; height: 20px; }
.actions { margin-top: 33px; display: flex; align-items: center; }
.save { width: 209px; height: 44px; }
.cancel { margin-left: 33px; color: #202124; background: transparent; }

.rail { width: 66px; flex: none; border-left: 1px solid #dadce0; padding: 25px 0 0 21px; }
.rail svg { width: 17px; height: 17px; display: block; }

/* taskbar */
.taskbar {
  height: 50px; flex: none; display: flex; align-items: stretch; background: #1e1e1e; color: #fff;
  font-family: "Open Sans", "Noto Sans", sans-serif;
}
.start { width: 61px; display: flex; align-items: center; justify-content: center; background: #1b1b1b; flex: none; padding-right: 2px; }
.start svg { width: 20px; height: 20px; }
.ts-box {
  width: 429px; background: #3f3f3f; border: 3px solid #7a7a7a; border-right-width: 2px; display: flex; align-items: center; padding-left: 11px; flex: none;
}
.ts-box svg { width: 20px; height: 22px; flex: none; }
.ts-box span { margin-left: 15px; font-size: 17.800px; color: #d8d8d8; white-space: nowrap; }
.ts-apps { width: 440px; flex: none; background: #2a2724; display: flex; padding-left: 0; }
.app { width: 62px; display: flex; align-items: center; justify-content: center; padding-bottom: 3px; padding-top: 3px; flex: none; }
.app svg { width: 29px; height: 31px; }
.app.view svg { width: 20px; height: 20px; }
.app.open { background: linear-gradient(#fdd69b, #fdd69b) center bottom / 51px 3px no-repeat; }
.app.chrome { background: linear-gradient(#fdd69b, #fdd69b) center bottom / 100% 3px no-repeat, #5a5855; }
.tray { flex: 1; display: flex; align-items: center; padding-left: 486px; background: #211f1e; }
.sun { width: 30px; height: 26px; flex: none; }
.temp { margin-left: 10px; font-size: 17.500px; white-space: nowrap; }
.haze { margin-left: 9px; font-size: 17.500px; white-space: nowrap; }
.chev { width: 16px; height: 9px; margin-left: 30px; flex: none; }
.tr-ic { width: 15px; height: 16px; margin-left: 15px; flex: none; }
.tr-ic + .tr-ic { height: 20px; margin-left: 16px; }
.batt { width: 20px; height: 12px; margin-left: 12px; flex: none; }
.vol { width: 20px; height: 18px; margin-left: 9px; flex: none; }
.lang { margin-left: 13px; font-size: 15px; }
.clock { width: 115px; margin-left: -4px; display: flex; flex-direction: column; align-items: center; font-size: 14.500px; line-height: 23px; flex: none; }
.notif { width: 20px; height: 20px; margin-left: 2px; flex: none; }
```
